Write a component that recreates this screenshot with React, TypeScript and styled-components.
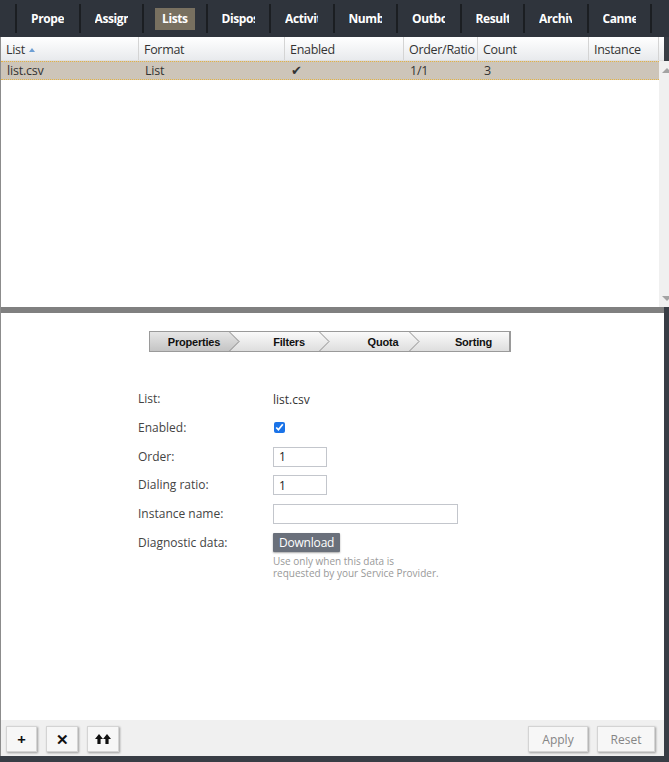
import styled, { createGlobalStyle } from 'styled-components';

const GlobalStyle = createGlobalStyle`
  html, body { margin: 0; padding: 0; }
  body { font-family: "Open Sans", "Noto Sans", sans-serif; }
  * { box-sizing: border-box; }
`;

const Page = styled.div`
  width: 669px;
  height: 762px;
  display: flex;
  flex-direction: column;
  background: #383d45;
  overflow: hidden;
`;

const TopBar = styled.div`
  height: 37px;
  flex: none;
  display: flex;
  align-items: center;
  padding-left: 15px;
  background: #2f343c;
`;

const Tab = styled.div`
  width: 63.5px;
  height: 29px;
  flex: none;
  display: flex;
  align-items: center;
  padding-left: 14px;
  border-left: 2px solid #1b1e22;
  &:last-child { width: 2px; padding: 0; }
`;

const TabLabel = styled.span<{ $active?: boolean }>`
  display: block;
  max-width: ${p => (p.$active ? '40px' : '33px')};
  overflow: hidden;
  white-space: nowrap;
  font-size: 12px;
  font-weight: 700;
  letter-spacing: -0.4px;
  color: #ffffff;
  line-height: 22px;
  ${p => p.$active && `
    background: #787060;
    padding: 0 7px;
    margin-left: -3px;
  `}
`;

const Main = styled.div`
  flex: 1;
  display: flex;
  flex-direction: column;
  margin-right: 5px;
  background: #ffffff;
  border-left: 1px solid #8c8c8c;
  min-height: 0;
`;

const GridArea = styled.div`
  height: 270px;
  flex: none;
  display: flex;
  flex-direction: column;
`;

const HeaderRow = styled.div`
  height: 24px;
  flex: none;
  display: flex;
  background: linear-gradient(#ffffff, #e8eaed);
  border-bottom: 1px solid #e0e0e0;
`;

const HeaderCell = styled.div<{ $w: number }>`
  width: ${p => p.$w}px;
  flex: none;
  padding: 1px 0 0 5px;
  display: flex;
  align-items: center;
  gap: 4px;
  font-size: 12.5px;
  letter-spacing: -0.3px;
  color: #333;
  border-right: 1px solid #d4d4d4;
  white-space: nowrap;
  overflow: hidden;
`;

const SortArrow = styled.span`
  width: 0;
  height: 0;
  border-left: 3.5px solid transparent;
  border-right: 3.5px solid transparent;
  border-bottom: 4px solid #6d9fd4;
  margin-top: 1px;
`;

const GridBody = styled.div`
  flex: 1;
  display: flex;
  min-height: 0;
`;

const Rows = styled.div`
  flex: 1;
`;

const DataRow = styled.div`
  height: 19px;
  display: flex;
  background: #cdc5b9;
  border-top: 1px dotted #e3b343;
  border-bottom: 1px dotted #e3b343;
`;

const DataCell = styled.div<{ $w: number }>`
  width: ${p => p.$w}px;
  flex: none;
  padding-left: 6px;
  font-size: 12.5px;
  letter-spacing: -0.2px;
  line-height: 17px;
  color: #333;
  white-space: nowrap;
`;

const ScrollBar = styled.div`
  width: 16px;
  flex: none;
  background: #f0f0f0;
  display: flex;
  flex-direction: column;
  justify-content: space-between;
  align-items: center;
  padding: 7px 0 6px;
`;

const ScrollArrow = styled.span<{ $down?: boolean }>`
  width: 0;
  height: 0;
  border-left: 5px solid transparent;
  border-right: 5px solid transparent;
  ${p => (p.$down ? 'border-top: 5px solid #a3a3a3;' : 'border-bottom: 5px solid #a3a3a3;')}
`;

const Splitter = styled.div`
  height: 6px;
  flex: none;
  background: #808080;
`;

const Detail = styled.div`
  flex: 1;
  display: flex;
  flex-direction: column;
  padding-top: 18px;
`;

const Steps = styled.div`
  align-self: flex-start;
  margin-left: 148px;
  width: 362px;
  height: 21px;
  display: flex;
  border: 1px solid #9a9a9a;
  border-right-width: 2px;
  background: linear-gradient(#fafafa, #dedede);
`;

const Step = styled.div<{ $active?: boolean; $pad?: number }>`
  width: 90px;
  flex: none;
  display: flex;
  align-items: center;
  justify-content: center;
  font-family: "Liberation Sans", Arial, sans-serif;
  font-size: 11px;
  font-weight: 700;
  letter-spacing: -0.2px;
  color: #111;
  padding-left: ${p => p.$pad ?? 4}px;
  &:last-child { flex: 1; width: auto; }
  ${p => p.$active && `
    background: linear-gradient(#e6e6e6, #c4c4c4);
    clip-path: polygon(0 0, calc(100% - 10px) 0, 100% 50%, calc(100% - 10px) 100%, 0 100%);
    padding-left: 0;
    padding-right: 2px;
  `}
`;

const Chevron = styled.svg`
  width: 11px;
  height: 19px;
  flex: none;
  margin-left: -11px;
  position: relative;
`;

const Form = styled.div`
  margin: 37px 0 0 137px;
  display: flex;
  flex-direction: column;
  gap: 8.8px;
`;

const FormRow = styled.div<{ $top?: boolean }>`
  display: flex;
  align-items: ${p => (p.$top ? 'flex-start' : 'center')};
  min-height: 20px;
`;

const Label = styled.div`
  width: 135px;
  flex: none;
  font-size: 12px;
  line-height: 20px;
  color: #444;
`;

const Value = styled.div`
  font-size: 12px;
  color: #333;
  display: flex;
  flex-direction: column;
  align-items: flex-start;
`;

const Check = styled.input`
  margin: 0 0 0 1px;
  width: 11px;
  height: 11px;
  accent-color: #1a73e8;
`;

const TextInput = styled.input<{ $w: number }>`
  width: ${p => p.$w}px;
  height: 20px;
  border: 1px solid #c3c6cc;
  padding: 0 5px;
  font-family: "Open Sans", sans-serif;
  font-size: 12px;
  color: #222;
  outline: none;
`;

const DarkButton = styled.button`
  height: 19px;
  padding: 0 6px;
  border: none;
  border-radius: 1px;
  background: #6a707b;
  color: #fff;
  font-family: "Open Sans", sans-serif;
  font-size: 12px;
  letter-spacing: -0.2px;
  box-shadow: 0 1px 2px rgba(0, 0, 0, 0.35);
`;

const Hint = styled.div`
  margin-top: 3px;
  font-size: 10px;
  line-height: 12px;
  color: #999;
`;

const Spacer = styled.div`
  flex: 1;
`;

const Toolbar = styled.div`
  height: 36px;
  flex: none;
  display: flex;
  align-items: flex-start;
  padding: 6px 9px 0 5px;
  gap: 9px;
  background: #f0f0f0;
`;

const ToolButton = styled.button<{ $w: number; $icon?: boolean }>`
  width: ${p => p.$w}px;
  height: 26px;
  display: flex;
  align-items: center;
  justify-content: center;
  background: #f7f7f7;
  border: 1px solid #d4d4d4;
  box-shadow: 1px 1px 2px rgba(0, 0, 0, 0.35);
  font-family: "Open Sans", sans-serif;
  font-size: ${p => (p.$icon ? '15px' : '12px')};
  font-weight: ${p => (p.$icon ? 700 : 400)};
  color: ${p => (p.$icon ? '#111' : '#858585')};
  padding: 0;
`;

const BottomEdge = styled.div`
  height: 6px;
  flex: none;
`;

const columns = [
  { name: 'List', w: 138, value: 'list.csv' },
  { name: 'Format', w: 146, value: 'List' },
  { name: 'Enabled', w: 119, value: '✔' },
  { name: 'Order/Ratio', w: 74, value: '1/1' },
  { name: 'Count', w: 111, value: '3' },
  { name: 'Instance', w: 70, value: '' },
];

const tabs = ['Properties', 'Assignments', 'Lists', 'Dispositions', 'Activities', 'Numbers', 'Outbound', 'Results', 'Archive', 'Canned'];

function ChevronLine() {
  return (
    <Chevron viewBox="0 0 11 19">
      <polyline points="0.5,0 10,9.5 0.5,19" fill="none" stroke="#8e8e8e" strokeWidth="1" />
    </Chevron>
  );
}

function DoubleUp() {
  return (
    <svg width="16" height="10" viewBox="0 0 16 10">
      <path d="M4 0 L8 5 L5.6 5 L5.6 10 L2.4 10 L2.4 5 L0 5 Z" fill="#111" />
      <path d="M12 0 L16 5 L13.6 5 L13.6 10 L10.4 10 L10.4 5 L8 5 Z" fill="#111" />
    </svg>
  );
}

export default function App() {
  return (
    <>
      <GlobalStyle />
      <Page>
        <TopBar>
          {tabs.map(t => (
            <Tab key={t}>
              <TabLabel $active={t === 'Lists'}>{t}</TabLabel>
            </Tab>
          ))}
          <Tab />
        </TopBar>
        <Main>
          <GridArea>
            <HeaderRow>
              {columns.map(c => (
                <HeaderCell key={c.name} $w={c.w}>
                  {c.name}
                  {c.name === 'List' && <SortArrow />}
                </HeaderCell>
              ))}
            </HeaderRow>
            <GridBody>
              <Rows>
                <DataRow>
                  {columns.map(c => (
                    <DataCell key={c.name} $w={c.w}>{c.value}</DataCell>
                  ))}
                </DataRow>
              </Rows>
              <ScrollBar>
                <ScrollArrow />
                <ScrollArrow $down />
              </ScrollBar>
            </GridBody>
          </GridArea>
          <Splitter />
          <Detail>
            <Steps>
              <Step $active>Properties</Step>
              <ChevronLine />
              <Step $pad={8}>Filters</Step>
              <ChevronLine />
              <Step $pad={16}>Quota</Step>
              <ChevronLine />
              <Step $pad={18}>Sorting</Step>
            </Steps>
            <Form>
              <FormRow>
                <Label>List:</Label>
                <Value>list.csv</Value>
              </FormRow>
              <FormRow>
                <Label>Enabled:</Label>
                <Value><Check type="checkbox" defaultChecked /></Value>
              </FormRow>
              <FormRow>
                <Label>Order:</Label>
                <Value><TextInput $w={54} defaultValue="1" /></Value>
              </FormRow>
              <FormRow>
                <Label>Dialing ratio:</Label>
                <Value><TextInput $w={54} defaultValue="1" /></Value>
              </FormRow>
              <FormRow>
                <Label>Instance name:</Label>
                <Value><TextInput $w={185} defaultValue="" /></Value>
              </FormRow>
              <FormRow $top>
                <Label>Diagnostic data:</Label>
                <Value>
                  <DarkButton>Download</DarkButton>
                  <Hint>Use only when this data is<br />requested by your Service Provider.</Hint>
                </Value>
              </FormRow>
            </Form>
          </Detail>
          <Toolbar>
            <ToolButton $w={31} $icon>+</ToolButton>
            <ToolButton $w={32} $icon>✕</ToolButton>
            <ToolButton $w={32}><DoubleUp /></ToolButton>
            <Spacer />
            <ToolButton $w={60}>Apply</ToolButton>
            <ToolButton $w={58}>Reset</ToolButton>
          </Toolbar>
        </Main>
        <BottomEdge />
      </Page>
    </>
  );
}
